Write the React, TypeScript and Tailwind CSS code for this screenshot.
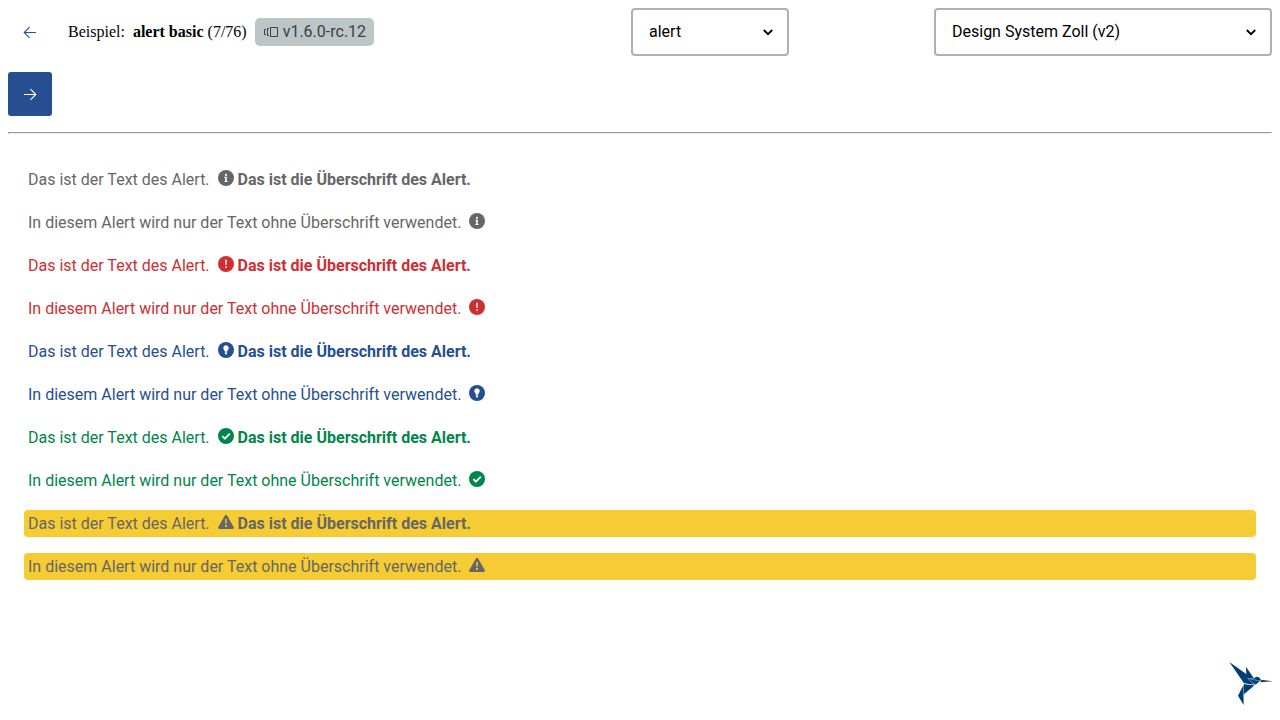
import React from "react";

type AlertKind = "default" | "error" | "info" | "success" | "warning";

const tones: Record<AlertKind, string> = {
  default: "text-[#666666]",
  error: "text-[#cf2e33]",
  info: "text-[#254f90]",
  success: "text-[#00854a]",
  warning: "bg-[#f6cc35] text-[#666666]",
};

const kinds: AlertKind[] = ["default", "error", "info", "success", "warning"];

function AlertIcon({ kind }: { kind: AlertKind }) {
  return (
    <svg viewBox="0 0 16 16" className="h-4 w-4 shrink-0" fill="currentColor" aria-hidden="true">
      {kind === "warning" ? (
        <path d="M8 .8c.5 0 .9.2 1.1.6l6.7 11.800c.5.800-.1 1.800-1.100 1.800H1.300c-1 0-1.600-1-1.100-1.800L6.900 1.400C7.100 1 7.500.8 8 .8Z" />
      ) : (
        <circle cx="8" cy="8" r="8" />
      )}
      {kind === "default" && (
        <g className="fill-white">
          <circle cx="8" cy="4.900" r="1.050" />
          <path d="M6.500 6.800h2.300v4.100h.8v1.100H6.400v-1.100h.8V7.900h-.7Z" />
        </g>
      )}
      {kind === "error" && (
        <g className="fill-white">
          <path d="M7.200 3.800h1.600l-.25 5.200h-1.100Z" />
          <circle cx="8" cy="11.100" r=".95" />
        </g>
      )}
      {kind === "info" && (
        <g className="fill-white">
          <path d="M8 3.300a2.700 2.700 0 0 1 2.100 4.400c-.6.700-.9 1.300-.9 2H6.800c0-.7-.3-1.300-.9-2A2.700 2.700 0 0 1 8 3.300Z" />
          <path d="M6.900 10.200h2.200v1.200l-.6 1h-1l-.6-1Z" />
        </g>
      )}
      {kind === "success" && (
        <path d="m4.400 8.100 2.500 2.500 4.900-4.900" fill="none" stroke="white" strokeWidth="1.900" />
      )}
      {kind === "warning" && (
        <g className="fill-[#f6cc35]">
          <path d="M7.100 5h1.800l-.3 4.700H7.400Z" />
          <circle cx="8" cy="11.900" r="1.050" />
        </g>
      )}
    </svg>
  );
}

function Alert({ kind, text, heading }: { kind: AlertKind; text: string; heading?: string }) {
  return (
    <div className={`flex items-start rounded px-1 ${tones[kind]}`}>
      <span>{text}</span>
      <span className="mr-1 ml-2 pt-1">
        <AlertIcon kind={kind} />
      </span>
      {heading && <strong className="font-bold">{heading}</strong>}
    </div>
  );
}

function Arrow({ left = false }: { left?: boolean }) {
  return (
    <svg viewBox="0 0 14 12" className="h-3 w-3.5" fill="none" stroke="currentColor" strokeWidth="1.100" aria-hidden="true">
      <path d={left ? "M13 6.500H1.500M6.500 1.200 1.200 6.500l5.300 5.300" : "M1 6.500h11.500M7.500 1.200l5.300 5.300-5.300 5.300"} />
    </svg>
  );
}

function Bird() {
  return (
    <svg viewBox="0 0 180 180" className="h-15 w-15" fill="#003f72" aria-hidden="true">
      <path d="M28 18 83 57 104 87 72 82Z" />
      <path d="M78 32 101 66 84 67 79 54Z" />
      <path d="M83 68 102 67 109 62 117 64 123 72 107 86Z" />
      <path d="M123 71 158 76 121 79Z" />
      <path d="M71 84 104 88 71 116Z" />
      <path d="M70 88 71 147 54 119Z" />
      <path d="M83 67 124 76M83 67 106 88 70 83M106 88 70 116" fill="none" stroke="white" strokeWidth="1.200" />
    </svg>
  );
}

function Select({ label, value, width }: { label: string; value: string; width: string }) {
  return (
    <div className={`relative ${width}`}>
      <select
        aria-label={label}
        className="h-12 w-full appearance-none rounded-[4px] border-2 border-[#b0b0b0] bg-white px-4 text-base text-black"
      >
        <option>{value}</option>
      </select>
      <svg
        viewBox="0 0 10 6"
        className="pointer-events-none absolute top-5.5 right-4 h-1.5 w-2.5 -translate-y-px"
        fill="none"
        stroke="black"
        strokeWidth="1.900"
        aria-hidden="true"
        overflow="visible"
      >
        <path d="M.8 1 5 5.200 9.200 1" />
      </svg>
    </div>
  );
}

export default function App() {
  return (
    <div className="min-h-screen bg-white p-2 font-['Roboto',sans-serif] text-base text-black">
      <header className="flex items-start justify-between">
        <div className="flex w-[478px] flex-col gap-4">
          <div className="flex h-12 items-center">
            <button type="button" aria-label="Vorheriges Beispiel" className="flex h-11 w-11 items-center justify-center text-[#254f90]">
              <Arrow left />
            </button>
            <span className="ml-4 whitespace-pre font-['Liberation_Serif',serif]">
              Beispiel:{"  "}<b>alert basic</b> (7/76)
            </span>
            <span className="ml-2 flex h-7 items-center gap-1 rounded-[5px] bg-[#bec5c9] px-2 text-[#3b4043]">
              <svg viewBox="0 0 16 12" className="h-3 w-4" fill="none" stroke="currentColor" aria-hidden="true">
                <path d="M7.500 1.500h7v9h-7ZM6 2.500H4.500v7H6M3 3.500H1.500v5H3" />
              </svg>
              v1.6.0-rc.12
            </span>
          </div>
          <button type="button" aria-label="Nächstes Beispiel" className="flex h-11 w-11 items-center justify-center rounded-[3px] bg-[#254f90] text-white">
            <Arrow />
          </button>
        </div>
        <Select label="Komponente" value="alert" width="w-[158px]" />
        <Select label="Design System" value="Design System Zoll (v2)" width="w-[338px]" />
      </header>
      <hr className="mt-4 h-0.5 border border-t-[#9a9a9a] border-r-[#eeeeee] border-b-[#eeeeee] border-l-[#9a9a9a]" />
      <main className="mt-8 flex flex-col gap-4 px-4 leading-[27px]">
        {kinds.map((kind) => (
          <React.Fragment key={kind}>
            <Alert kind={kind} text="Das ist der Text des Alert." heading="Das ist die Überschrift des Alert." />
            <Alert kind={kind} text="In diesem Alert wird nur der Text ohne Überschrift verwendet." />
          </React.Fragment>
        ))}
      </main>
      <div className="fixed right-0 bottom-1">
        <Bird />
      </div>
    </div>
  );
}
